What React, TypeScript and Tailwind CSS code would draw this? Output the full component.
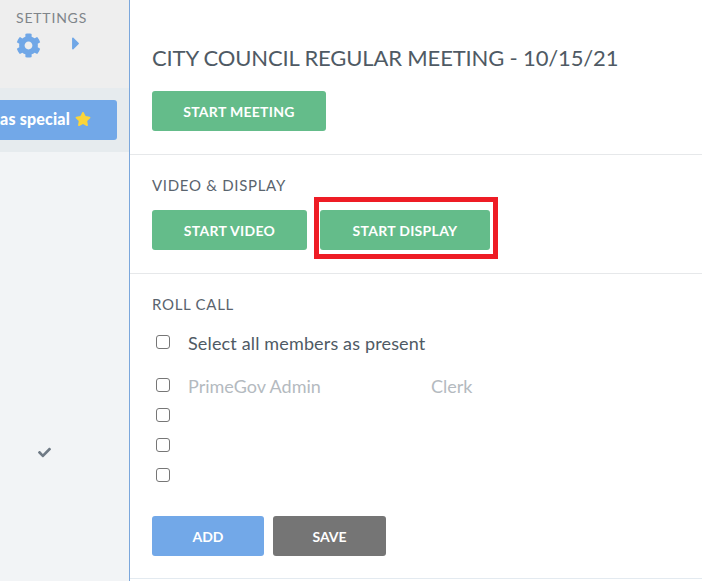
import React from "react";
import { FaCog, FaCheck, FaCaretRight, FaStar } from "react-icons/fa";

const font = "font-['Lato','Noto_Sans',sans-serif]";

function GreenButton({ label, className }: { label: string; className: string }) {
  return (
    <button className={`h-10 rounded-[3px] bg-[#64bc8a] text-white text-[14px] font-bold tracking-[0.3px] ${className}`}>
      {label}
    </button>
  );
}

function Box() {
  return <span className="block w-[14px] h-[14px] rounded-[3px] border-[1.5px] border-[#767676] bg-white" />;
}

function Member({ name, role }: { name?: string; role?: string }) {
  return (
    <div className="flex items-center h-[30px]">
      <div className="w-[36px] pl-[4px] shrink-0"><Box /></div>
      {name && <span className="w-[243px] pt-[2px] text-[#b4bac0] text-[18px]">{name}</span>}
      {role && <span className="pt-[2px] text-[#b4bac0] text-[18px]">{role}</span>}
    </div>
  );
}

export default function App() {
  return (
    <div className={`${font} flex w-[702px] h-[581px] overflow-hidden bg-white`}>
      <aside className="w-[130px] shrink-0 border-r border-[#7ba7dc] bg-[#f2f4f6] flex flex-col">
        <div className="h-[88px] bg-[#eeeeee] pt-[9px] pl-[16px]">
          <div className="text-[14px] leading-[17px] text-[#7f858a] tracking-[0.8px]">SETTINGS</div>
          <div className="flex items-center mt-[6px]">
            <FaCog className="w-[25px] h-[25px] text-[#70a7e7] mt-[1px]" />
            <FaCaretRight className="w-[16px] h-[21px] text-[#70a7e7] ml-[27px] mb-[3px]" />
          </div>
        </div>
        <div className="h-[64px] bg-[#e6ebee] pt-[12px] pr-[12px]">
          <div className="h-[40px] rounded-r-[3px] bg-[#72a8e8] flex items-center justify-end pr-[26px] pb-[3px] text-white text-[16px] font-black tracking-[0.2px] whitespace-nowrap">
            as special
            <FaStar className="w-[16px] h-[16px] text-[#fbd53a] ml-[5px]" />
          </div>
        </div>
        <div className="flex justify-center pr-[40px] pt-[294px]">
          <FaCheck className="w-[13px] h-[13px] text-[#6f7a85]" />
        </div>
      </aside>
      <main className="flex-1 flex flex-col">
        <section className="h-[155px] border-b border-[#e6e8ea] pl-[22px] pt-[43px]">
          <h1 className="text-[22px] leading-[29px] text-[#4f5a64] tracking-[-0.15px] whitespace-nowrap">CITY COUNCIL REGULAR MEETING - 10/15/21</h1>
          <GreenButton label="START MEETING" className="w-[174px] mt-[19px]" />
        </section>
        <section className="h-[119px] border-b border-[#e6e8ea] pl-[22px] pt-[21px]">
          <div className="text-[15px] leading-[18px] text-[#5a646e] tracking-[0.7px]">VIDEO &amp; DISPLAY</div>
          <div className="flex items-start mt-[16px]">
            <GreenButton label="START VIDEO" className="w-[155px]" />
            <div className="ml-[7px] -mt-[13px] border-[5px] border-[#ee1c25] pl-[1px] pr-[3px] pt-[8px] pb-[4px]">
              <GreenButton label="START DISPLAY" className="w-[170px] block" />
            </div>
          </div>
        </section>
        <section className="h-[305px] border-b border-[#e3eaf0] pl-[22px] pt-[21px]">
          <div className="text-[15px] leading-[18px] text-[#5a646e] tracking-[0.7px]">ROLL CALL</div>
          <div className="flex items-center h-[30px] mt-[14px]">
            <div className="w-[36px] pl-[4px] shrink-0"><Box /></div>
            <span className="pt-[2px] text-[18px] tracking-[0.15px] text-[#4f5a64]">Select all members as present</span>
          </div>
          <div className="mt-[13px]">
            <Member name="PrimeGov Admin" role="Clerk" />
            <Member />
            <Member />
            <Member />
          </div>
          <div className="flex gap-[9px] mt-[26px]">
            <button className="w-[112px] h-10 rounded-[3px] bg-[#72a8e8] text-white text-[14px] font-bold">ADD</button>
            <button className="w-[113px] h-10 rounded-[3px] bg-[#757575] text-white text-[14px] font-bold">SAVE</button>
          </div>
        </section>
      </main>
    </div>
  );
}
